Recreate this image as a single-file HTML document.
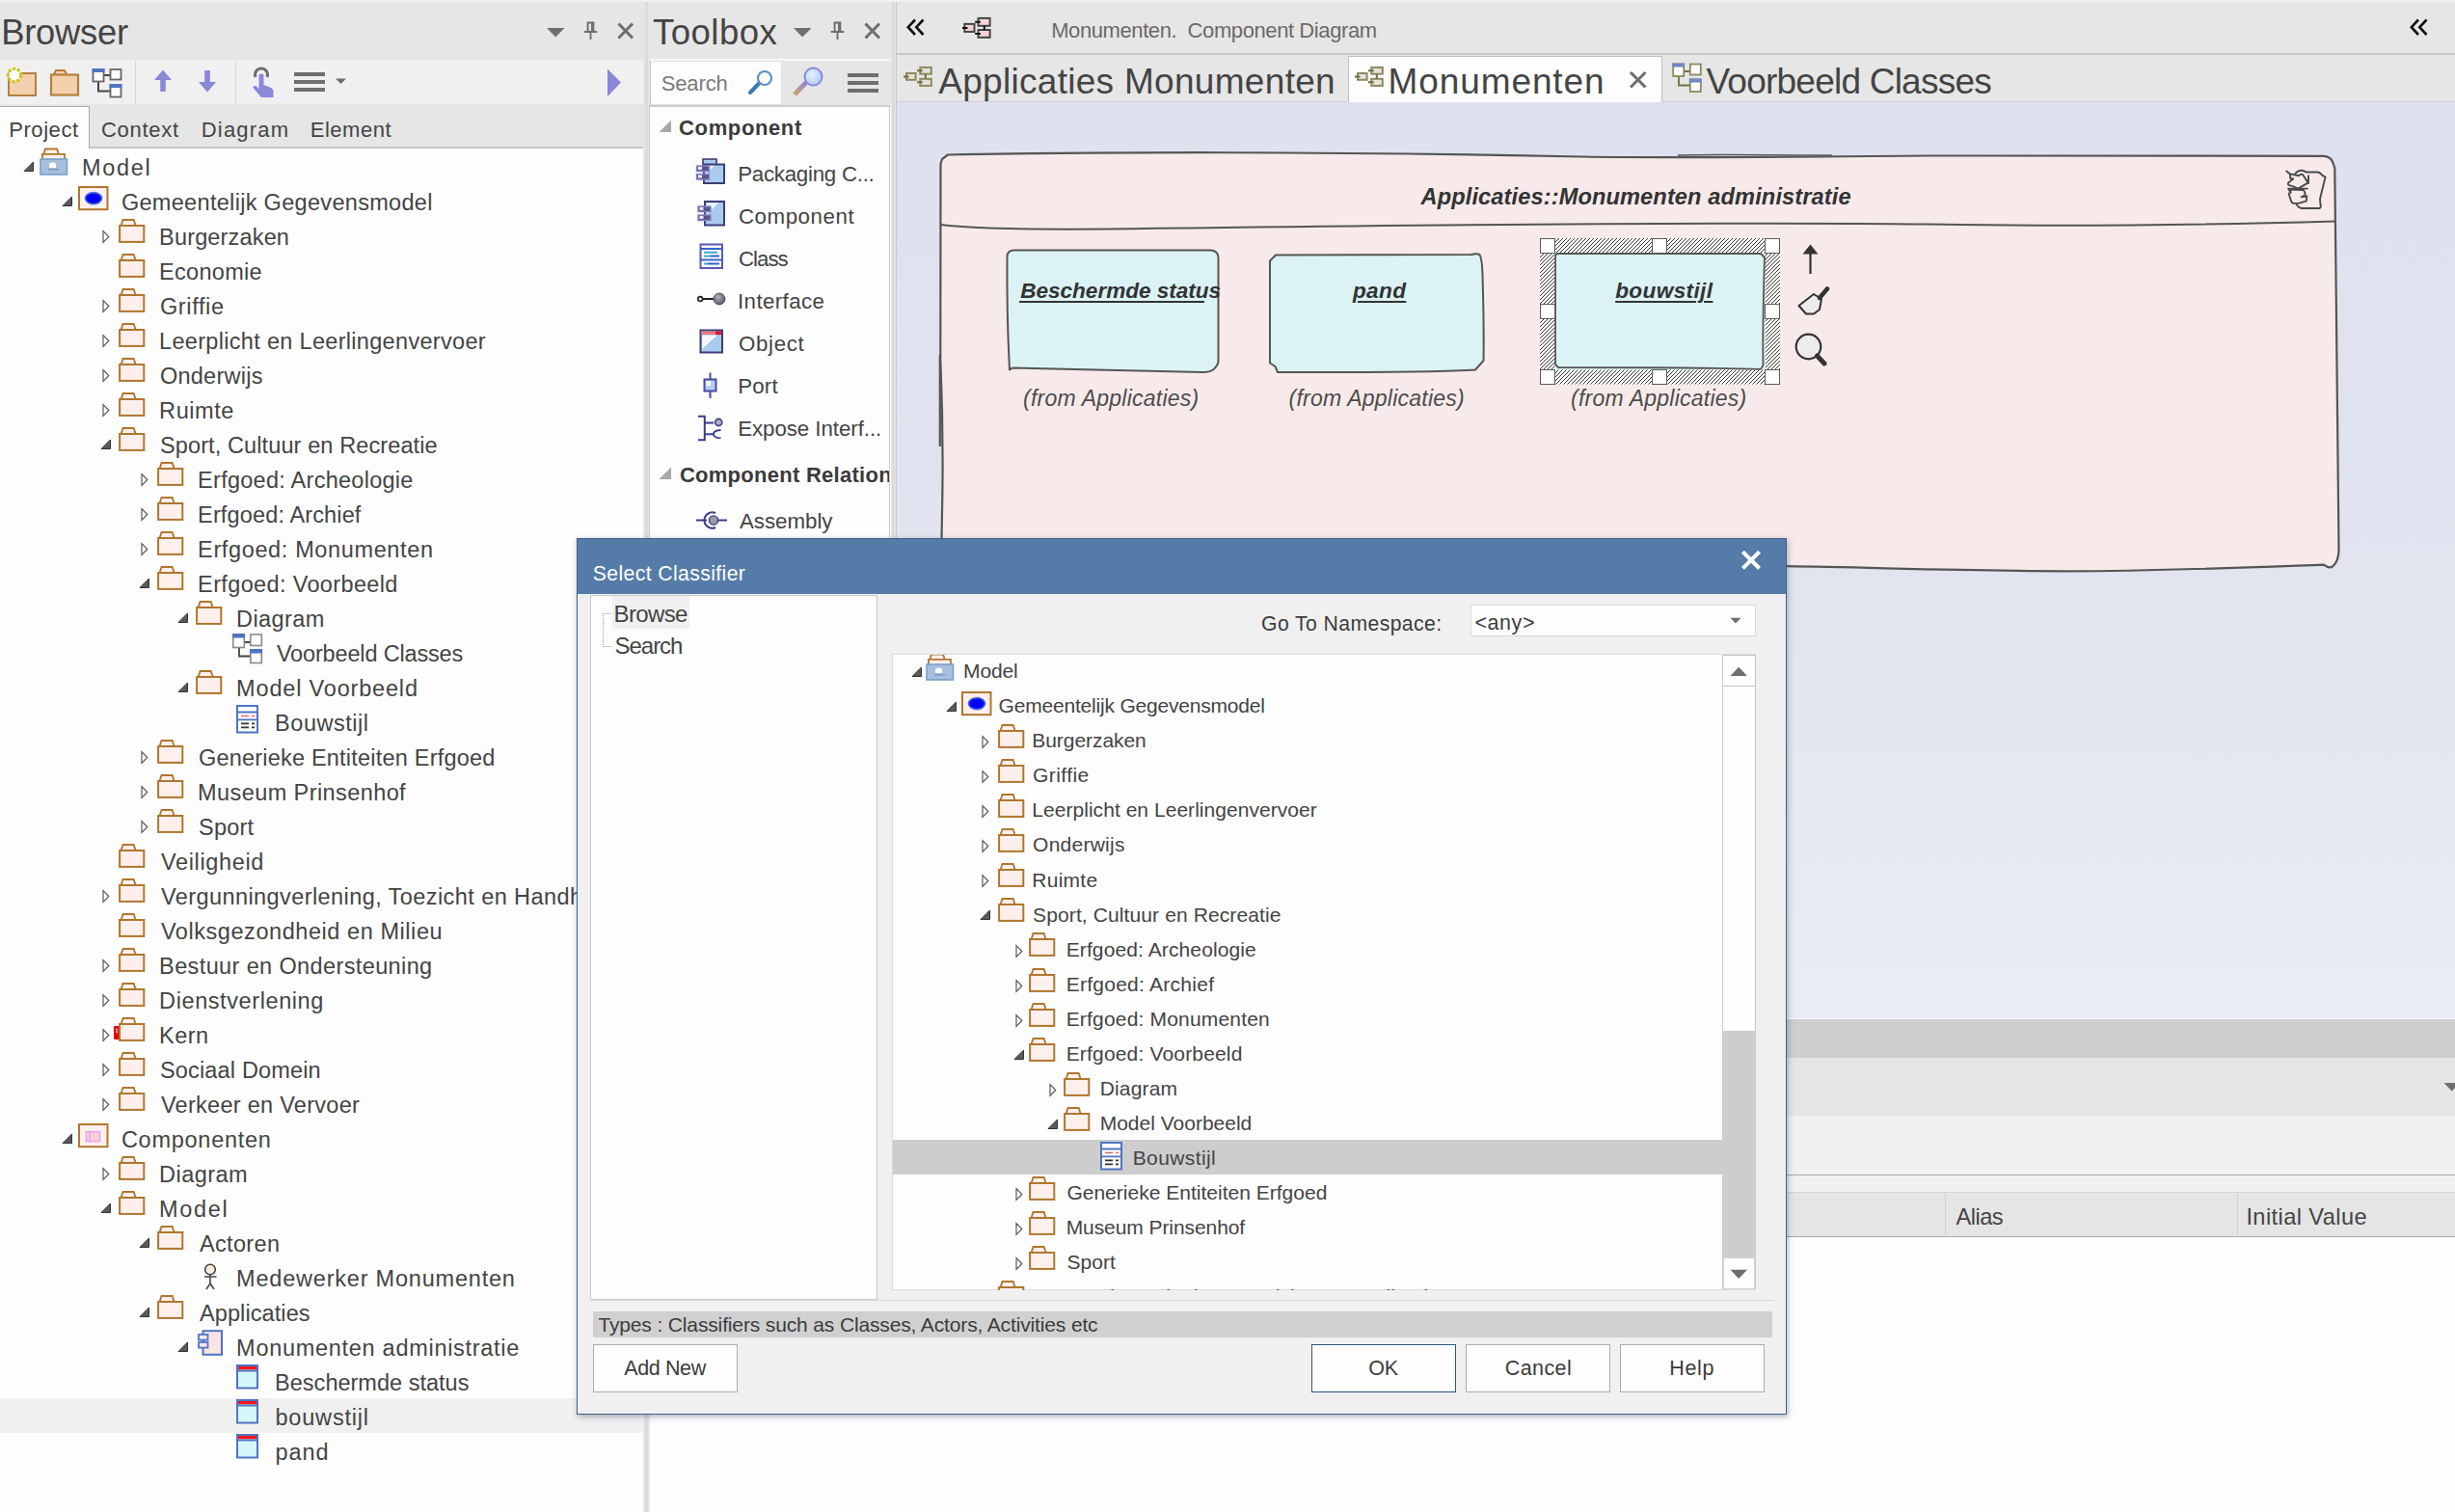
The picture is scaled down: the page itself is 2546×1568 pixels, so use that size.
<!DOCTYPE html>
<html><head><meta charset="utf-8"><title>EA</title>
<style>
html,body{margin:0;padding:0;}
body{width:2546px;height:1568px;position:relative;overflow:hidden;background:#fdfdfd;font-family:"Liberation Sans",sans-serif;}
.b{position:absolute;display:block;box-sizing:border-box;}
.t{position:absolute;white-space:pre;line-height:1;font-family:"Liberation Sans",sans-serif;}
.clip{position:absolute;overflow:hidden;}
</style></head><body>

<div class="b" style="left:0px;top:0px;width:2546px;height:2px;background:#efefef;"></div>
<div class="b" style="left:0px;top:2px;width:667px;height:60px;background:#e6e6e6;"></div>
<div class="b" style="left:0px;top:62px;width:667px;height:46px;background:#f0f0f0;"></div>
<div class="b" style="left:0px;top:108px;width:667px;height:45.4px;background:#e6e6e6;"></div>
<div class="b" style="left:92px;top:152.3px;width:575px;height:1.4px;background:#c4c4c4;"></div>
<div class="b" style="left:0px;top:110px;width:93px;height:43.7px;background:#fdfdfd;border-top:1.5px solid #a8a8a8;border-right:1.5px solid #a8a8a8;"></div>
<span class="t" style="left:1.2px;top:16px;font-size:36.4px;color:#444444;letter-spacing:-0.25px;">Browser</span>
<span class="t" style="left:9.2px;top:124px;font-size:22px;color:#444444;letter-spacing:0.57px;">Project</span>
<span class="t" style="left:104.9px;top:124px;font-size:22px;color:#444444;letter-spacing:0.73px;">Context</span>
<span class="t" style="left:208.8px;top:124px;font-size:22px;color:#444444;letter-spacing:1.18px;">Diagram</span>
<span class="t" style="left:321.7px;top:124px;font-size:22px;color:#444444;letter-spacing:0.53px;">Element</span>
<svg class="b" style="left:567px;top:28px;" width="20" height="12" viewBox="0 0 20 12"><path d="M0 1 L18.5 1 L9.2 10.5 Z" fill="#6e6e6e"/></svg>
<svg class="b" style="left:604.5px;top:22px;" width="16" height="20" viewBox="0 0 16 20"><path d="M3.6 1.5 L11.4 1.5 M4.6 1.5 L4.6 10.5 M10.4 1.5 L10.4 10.5 M9 1.5 L9 10.5 M0.8 11 L14.2 11 M7.5 11 L7.5 19" fill="none" stroke="#6e6e6e" stroke-width="1.9"/></svg>
<svg class="b" style="left:639.5px;top:23px;" width="18" height="18" viewBox="0 0 18 18"><path d="M1.5 1.5 L16 16.5 M16 1.5 L1.5 16.5" fill="none" stroke="#6e6e6e" stroke-width="3"/></svg>
<svg class="b" style="left:5px;top:67px;" width="36" height="34" viewBox="0 0 36 34"><rect x="4" y="9" width="28" height="23" fill="#f3cfae" stroke="#b5813f" stroke-width="2"/><circle cx="10" cy="11" r="6.6" fill="#fdfdfd" stroke="#c8c81e" stroke-width="3.2" stroke-dasharray="3.2 1.6"/><circle cx="10" cy="11" r="4.6" fill="#ffffff"/></svg>
<svg class="b" style="left:50px;top:71px;" width="34" height="30" viewBox="0 0 34 30"><path d="M6 6 L8 2 L17 2 L19 6" fill="#f3cfae" stroke="#b5813f" stroke-width="2"/><rect x="3" y="6.5" width="28" height="21" fill="#f3cfae" stroke="#b5813f" stroke-width="2.2"/></svg>
<svg class="b" style="left:95px;top:70px;" width="33" height="33" viewBox="0 0 33 33"><path d="M13 8 L19 8 M7 15 L7 24.5 L19 24.5" fill="none" stroke="#444" stroke-width="2"/><rect x="1.5" y="2" width="11" height="12.5" fill="#fdfdfd" stroke="#666" stroke-width="1.8"/><rect x="0.6" y="1" width="12.8" height="4" fill="#4f74c4"/><rect x="19.5" y="2" width="11" height="10.5" fill="#fdfdfd" stroke="#666" stroke-width="1.8"/><rect x="19.5" y="18" width="11" height="12.5" fill="#fdfdfd" stroke="#666" stroke-width="1.8"/><rect x="18.6" y="17" width="12.8" height="4" fill="#4f74c4"/></svg>
<div class="b" style="left:140px;top:63px;width:1.2px;height:44px;background:#d2d2d2;"></div>
<svg class="b" style="left:159px;top:72px;" width="20" height="24" viewBox="0 0 20 24"><path d="M10 0.5 L19 11 L12.8 11 L12.8 23 L7.2 23 L7.2 11 L1 11 Z" fill="#8b87d9"/></svg>
<svg class="b" style="left:205px;top:72px;" width="20" height="24" viewBox="0 0 20 24"><path d="M10 23.5 L19 13 L12.8 13 L12.8 1 L7.2 1 L7.2 13 L1 13 Z" fill="#8b87d9"/></svg>
<div class="b" style="left:244px;top:63px;width:1.2px;height:44px;background:#d2d2d2;"></div>
<svg class="b" style="left:260px;top:68px;" width="26" height="34" viewBox="0 0 26 34"><path d="M5 12 A6.5 6.5 0 1 1 17 12" fill="none" stroke="#6e6e6e" stroke-width="3"/><path d="M8.5 9.5 Q11 7.5 13.5 9.5 L13.5 20 L21 23 Q24 24.5 23.5 28 L23.5 33 L11 33 L2 22.5 Q3.5 20 6 21.5 L8.5 24 Z" fill="#8b87d9"/></svg>
<div class="b" style="left:305px;top:75px;width:32px;height:4px;background:#6e6e6e;"></div>
<div class="b" style="left:305px;top:83px;width:32px;height:4px;background:#6e6e6e;"></div>
<div class="b" style="left:305px;top:91px;width:32px;height:4px;background:#6e6e6e;"></div>
<svg class="b" style="left:348px;top:81px;" width="12" height="7" viewBox="0 0 12 7"><path d="M0 0.5 L11 0.5 L5.5 6 Z" fill="#6e6e6e"/></svg>
<svg class="b" style="left:629px;top:71px;" width="16" height="30" viewBox="0 0 16 30"><path d="M1 0.5 L15 14.5 L1 29 Z" fill="#8b87d9"/></svg>
<div class="b" style="left:0px;top:1450px;width:667px;height:36px;background:#f0f0f0;"></div>
<svg class="b" style="left:23.5px;top:167px;" width="12" height="12" viewBox="0 0 12 12"><path d="M10.5 1 L10.5 10.5 L1 10.5 Z" fill="#5a5a5a" stroke="#333" stroke-width="1"/></svg>
<svg class="b" style="left:41px;top:153px;" width="30" height="30" viewBox="0 0 30 30"><path d="M4.5 6 L6 1.5 L18 1.5 L19.5 6" fill="#fdf0ec" stroke="#b0762e" stroke-width="1.8"/><path d="M3 12 L3 6.8 L26 6.8 L26 12" fill="#fdf0ec" stroke="#b0762e" stroke-width="1.8"/><rect x="1" y="12" width="27.5" height="16" fill="#a7bfdc" stroke="#7ba0cc" stroke-width="1.6"/><path d="M10 21 L10 18 Q10 15.5 13.5 15.5 Q17 15.5 17 18 L17 21 Z" fill="#fdfdfd"/><rect x="9" y="22" width="11" height="1.6" fill="#7ba0cc"/></svg>
<span class="t" style="left:85.1px;top:163px;font-size:23.5px;color:#444444;letter-spacing:1.68px;">Model</span>
<svg class="b" style="left:63.5px;top:203px;" width="12" height="12" viewBox="0 0 12 12"><path d="M10.5 1 L10.5 10.5 L1 10.5 Z" fill="#5a5a5a" stroke="#333" stroke-width="1"/></svg>
<svg class="b" style="left:81px;top:192.8px;" width="32" height="27" viewBox="0 0 32 27"><rect x="1" y="1" width="29.5" height="23.2" fill="#fdf0ec" stroke="#b0762e" stroke-width="2"/><ellipse cx="16" cy="12.6" rx="8.6" ry="6" fill="#0000ff" stroke="#4a6fd8" stroke-width="1.6"/></svg>
<span class="t" style="left:125.9px;top:199px;font-size:23.5px;color:#444444;letter-spacing:0.31px;">Gemeentelijk Gegevensmodel</span>
<svg class="b" style="left:105.5px;top:238px;" width="9" height="15" viewBox="0 0 9 15"><path d="M1 1.6 L6.8 7.5 L1 13.4 Z" fill="#fdfdfd" stroke="#555" stroke-width="1.15"/></svg>
<svg class="b" style="left:123px;top:227px;" width="28" height="26" viewBox="0 0 28 26"><path d="M2.7 6.6 L4.5 1 L15.7 1 L17.5 6.6" fill="#fdf0ec" stroke="#b0762e" stroke-width="1.8"/><rect x="1.1" y="7" width="25.2" height="16.9" fill="#fdf0ec" stroke="#b0762e" stroke-width="2"/></svg>
<span class="t" style="left:165.1px;top:235px;font-size:23.5px;color:#444444;letter-spacing:0.16px;">Burgerzaken</span>
<svg class="b" style="left:123px;top:263px;" width="28" height="26" viewBox="0 0 28 26"><path d="M2.7 6.6 L4.5 1 L15.7 1 L17.5 6.6" fill="#fdf0ec" stroke="#b0762e" stroke-width="1.8"/><rect x="1.1" y="7" width="25.2" height="16.9" fill="#fdf0ec" stroke="#b0762e" stroke-width="2"/></svg>
<span class="t" style="left:165.1px;top:271px;font-size:23.5px;color:#444444;letter-spacing:0.28px;">Economie</span>
<svg class="b" style="left:105.5px;top:310px;" width="9" height="15" viewBox="0 0 9 15"><path d="M1 1.6 L6.8 7.5 L1 13.4 Z" fill="#fdfdfd" stroke="#555" stroke-width="1.15"/></svg>
<svg class="b" style="left:123px;top:299px;" width="28" height="26" viewBox="0 0 28 26"><path d="M2.7 6.6 L4.5 1 L15.7 1 L17.5 6.6" fill="#fdf0ec" stroke="#b0762e" stroke-width="1.8"/><rect x="1.1" y="7" width="25.2" height="16.9" fill="#fdf0ec" stroke="#b0762e" stroke-width="2"/></svg>
<span class="t" style="left:165.9px;top:307px;font-size:23.5px;color:#444444;letter-spacing:0.64px;">Griffie</span>
<svg class="b" style="left:105.5px;top:346px;" width="9" height="15" viewBox="0 0 9 15"><path d="M1 1.6 L6.8 7.5 L1 13.4 Z" fill="#fdfdfd" stroke="#555" stroke-width="1.15"/></svg>
<svg class="b" style="left:123px;top:335px;" width="28" height="26" viewBox="0 0 28 26"><path d="M2.7 6.6 L4.5 1 L15.7 1 L17.5 6.6" fill="#fdf0ec" stroke="#b0762e" stroke-width="1.8"/><rect x="1.1" y="7" width="25.2" height="16.9" fill="#fdf0ec" stroke="#b0762e" stroke-width="2"/></svg>
<span class="t" style="left:165.1px;top:343px;font-size:23.5px;color:#444444;letter-spacing:0.31px;">Leerplicht en Leerlingenvervoer</span>
<svg class="b" style="left:105.5px;top:382px;" width="9" height="15" viewBox="0 0 9 15"><path d="M1 1.6 L6.8 7.5 L1 13.4 Z" fill="#fdfdfd" stroke="#555" stroke-width="1.15"/></svg>
<svg class="b" style="left:123px;top:371px;" width="28" height="26" viewBox="0 0 28 26"><path d="M2.7 6.6 L4.5 1 L15.7 1 L17.5 6.6" fill="#fdf0ec" stroke="#b0762e" stroke-width="1.8"/><rect x="1.1" y="7" width="25.2" height="16.9" fill="#fdf0ec" stroke="#b0762e" stroke-width="2"/></svg>
<span class="t" style="left:165.9px;top:379px;font-size:23.5px;color:#444444;letter-spacing:0.27px;">Onderwijs</span>
<svg class="b" style="left:105.5px;top:418px;" width="9" height="15" viewBox="0 0 9 15"><path d="M1 1.6 L6.8 7.5 L1 13.4 Z" fill="#fdfdfd" stroke="#555" stroke-width="1.15"/></svg>
<svg class="b" style="left:123px;top:407px;" width="28" height="26" viewBox="0 0 28 26"><path d="M2.7 6.6 L4.5 1 L15.7 1 L17.5 6.6" fill="#fdf0ec" stroke="#b0762e" stroke-width="1.8"/><rect x="1.1" y="7" width="25.2" height="16.9" fill="#fdf0ec" stroke="#b0762e" stroke-width="2"/></svg>
<span class="t" style="left:165.1px;top:415px;font-size:23.5px;color:#444444;letter-spacing:0.57px;">Ruimte</span>
<svg class="b" style="left:103.5px;top:455px;" width="12" height="12" viewBox="0 0 12 12"><path d="M10.5 1 L10.5 10.5 L1 10.5 Z" fill="#5a5a5a" stroke="#333" stroke-width="1"/></svg>
<svg class="b" style="left:123px;top:443px;" width="28" height="26" viewBox="0 0 28 26"><path d="M2.7 6.6 L4.5 1 L15.7 1 L17.5 6.6" fill="#fdf0ec" stroke="#b0762e" stroke-width="1.8"/><rect x="1.1" y="7" width="25.2" height="16.9" fill="#fdf0ec" stroke="#b0762e" stroke-width="2"/></svg>
<span class="t" style="left:166.0px;top:451px;font-size:23.5px;color:#444444;letter-spacing:0.11px;">Sport, Cultuur en Recreatie</span>
<svg class="b" style="left:145.5px;top:490px;" width="9" height="15" viewBox="0 0 9 15"><path d="M1 1.6 L6.8 7.5 L1 13.4 Z" fill="#fdfdfd" stroke="#555" stroke-width="1.15"/></svg>
<svg class="b" style="left:163px;top:479px;" width="28" height="26" viewBox="0 0 28 26"><path d="M2.7 6.6 L4.5 1 L15.7 1 L17.5 6.6" fill="#fdf0ec" stroke="#b0762e" stroke-width="1.8"/><rect x="1.1" y="7" width="25.2" height="16.9" fill="#fdf0ec" stroke="#b0762e" stroke-width="2"/></svg>
<span class="t" style="left:205.1px;top:487px;font-size:23.5px;color:#444444;letter-spacing:0.27px;">Erfgoed: Archeologie</span>
<svg class="b" style="left:145.5px;top:526px;" width="9" height="15" viewBox="0 0 9 15"><path d="M1 1.6 L6.8 7.5 L1 13.4 Z" fill="#fdfdfd" stroke="#555" stroke-width="1.15"/></svg>
<svg class="b" style="left:163px;top:515px;" width="28" height="26" viewBox="0 0 28 26"><path d="M2.7 6.6 L4.5 1 L15.7 1 L17.5 6.6" fill="#fdf0ec" stroke="#b0762e" stroke-width="1.8"/><rect x="1.1" y="7" width="25.2" height="16.9" fill="#fdf0ec" stroke="#b0762e" stroke-width="2"/></svg>
<span class="t" style="left:205.1px;top:523px;font-size:23.5px;color:#444444;letter-spacing:0.14px;">Erfgoed: Archief</span>
<svg class="b" style="left:145.5px;top:562px;" width="9" height="15" viewBox="0 0 9 15"><path d="M1 1.6 L6.8 7.5 L1 13.4 Z" fill="#fdfdfd" stroke="#555" stroke-width="1.15"/></svg>
<svg class="b" style="left:163px;top:551px;" width="28" height="26" viewBox="0 0 28 26"><path d="M2.7 6.6 L4.5 1 L15.7 1 L17.5 6.6" fill="#fdf0ec" stroke="#b0762e" stroke-width="1.8"/><rect x="1.1" y="7" width="25.2" height="16.9" fill="#fdf0ec" stroke="#b0762e" stroke-width="2"/></svg>
<span class="t" style="left:205.1px;top:559px;font-size:23.5px;color:#444444;letter-spacing:0.63px;">Erfgoed: Monumenten</span>
<svg class="b" style="left:143.5px;top:599px;" width="12" height="12" viewBox="0 0 12 12"><path d="M10.5 1 L10.5 10.5 L1 10.5 Z" fill="#5a5a5a" stroke="#333" stroke-width="1"/></svg>
<svg class="b" style="left:163px;top:587px;" width="28" height="26" viewBox="0 0 28 26"><path d="M2.7 6.6 L4.5 1 L15.7 1 L17.5 6.6" fill="#fdf0ec" stroke="#b0762e" stroke-width="1.8"/><rect x="1.1" y="7" width="25.2" height="16.9" fill="#fdf0ec" stroke="#b0762e" stroke-width="2"/></svg>
<span class="t" style="left:205.1px;top:595px;font-size:23.5px;color:#444444;letter-spacing:0.36px;">Erfgoed: Voorbeeld</span>
<svg class="b" style="left:183.5px;top:635px;" width="12" height="12" viewBox="0 0 12 12"><path d="M10.5 1 L10.5 10.5 L1 10.5 Z" fill="#5a5a5a" stroke="#333" stroke-width="1"/></svg>
<svg class="b" style="left:203px;top:623px;" width="28" height="26" viewBox="0 0 28 26"><path d="M2.7 6.6 L4.5 1 L15.7 1 L17.5 6.6" fill="#fdf0ec" stroke="#b0762e" stroke-width="1.8"/><rect x="1.1" y="7" width="25.2" height="16.9" fill="#fdf0ec" stroke="#b0762e" stroke-width="2"/></svg>
<span class="t" style="left:245.1px;top:631px;font-size:23.5px;color:#444444;letter-spacing:0.40px;">Diagram</span>
<svg class="b" style="left:241px;top:656.7px;" width="32" height="32" viewBox="0 0 32 32"><path d="M13 9 L19 9 M7 15 L7 23.5 L19 23.5" fill="none" stroke="#444" stroke-width="1.8"/><rect x="0.8" y="1" width="11.5" height="13.5" fill="#fdfdfd" stroke="#8a8a8a" stroke-width="1.6"/><rect x="0" y="0" width="13" height="4.5" fill="#4f74c4"/><rect x="18.8" y="1" width="11.5" height="11.5" fill="#fdfdfd" stroke="#8a8a8a" stroke-width="1.6"/><rect x="18.8" y="17" width="11.5" height="13.5" fill="#fdfdfd" stroke="#8a8a8a" stroke-width="1.6"/><rect x="18" y="16" width="13" height="4.5" fill="#4f74c4"/></svg>
<span class="t" style="left:286.9px;top:667px;font-size:23.5px;color:#444444;letter-spacing:-0.16px;">Voorbeeld Classes</span>
<svg class="b" style="left:183.5px;top:707px;" width="12" height="12" viewBox="0 0 12 12"><path d="M10.5 1 L10.5 10.5 L1 10.5 Z" fill="#5a5a5a" stroke="#333" stroke-width="1"/></svg>
<svg class="b" style="left:203px;top:695px;" width="28" height="26" viewBox="0 0 28 26"><path d="M2.7 6.6 L4.5 1 L15.7 1 L17.5 6.6" fill="#fdf0ec" stroke="#b0762e" stroke-width="1.8"/><rect x="1.1" y="7" width="25.2" height="16.9" fill="#fdf0ec" stroke="#b0762e" stroke-width="2"/></svg>
<span class="t" style="left:245.1px;top:703px;font-size:23.5px;color:#444444;letter-spacing:0.82px;">Model Voorbeeld</span>
<svg class="b" style="left:245px;top:730.7px;" width="24" height="30" viewBox="0 0 24 30"><rect x="1" y="1" width="21" height="27.5" fill="#fdfdfd" stroke="#4f74c4" stroke-width="2"/><path d="M1 7.5 L22 7.5 M1 15.3 L22 15.3" stroke="#4f74c4" stroke-width="1.8"/><path d="M5 11.5 L13 11.5 M16 11.5 L19 11.5" stroke="#e8606a" stroke-width="1.6"/><path d="M5 19.3 L13 19.3 M16 19.3 L19 19.3 M5 23.3 L13 23.3 M16 23.3 L19 23.3" stroke="#333" stroke-width="1.8"/></svg>
<span class="t" style="left:285.1px;top:739px;font-size:23.5px;color:#444444;letter-spacing:0.52px;">Bouwstijl</span>
<svg class="b" style="left:145.5px;top:778px;" width="9" height="15" viewBox="0 0 9 15"><path d="M1 1.6 L6.8 7.5 L1 13.4 Z" fill="#fdfdfd" stroke="#555" stroke-width="1.15"/></svg>
<svg class="b" style="left:163px;top:767px;" width="28" height="26" viewBox="0 0 28 26"><path d="M2.7 6.6 L4.5 1 L15.7 1 L17.5 6.6" fill="#fdf0ec" stroke="#b0762e" stroke-width="1.8"/><rect x="1.1" y="7" width="25.2" height="16.9" fill="#fdf0ec" stroke="#b0762e" stroke-width="2"/></svg>
<span class="t" style="left:205.9px;top:775px;font-size:23.5px;color:#444444;letter-spacing:0.21px;">Generieke Entiteiten Erfgoed</span>
<svg class="b" style="left:145.5px;top:814px;" width="9" height="15" viewBox="0 0 9 15"><path d="M1 1.6 L6.8 7.5 L1 13.4 Z" fill="#fdfdfd" stroke="#555" stroke-width="1.15"/></svg>
<svg class="b" style="left:163px;top:803px;" width="28" height="26" viewBox="0 0 28 26"><path d="M2.7 6.6 L4.5 1 L15.7 1 L17.5 6.6" fill="#fdf0ec" stroke="#b0762e" stroke-width="1.8"/><rect x="1.1" y="7" width="25.2" height="16.9" fill="#fdf0ec" stroke="#b0762e" stroke-width="2"/></svg>
<span class="t" style="left:205.1px;top:811px;font-size:23.5px;color:#444444;letter-spacing:0.41px;">Museum Prinsenhof</span>
<svg class="b" style="left:145.5px;top:850px;" width="9" height="15" viewBox="0 0 9 15"><path d="M1 1.6 L6.8 7.5 L1 13.4 Z" fill="#fdfdfd" stroke="#555" stroke-width="1.15"/></svg>
<svg class="b" style="left:163px;top:839px;" width="28" height="26" viewBox="0 0 28 26"><path d="M2.7 6.6 L4.5 1 L15.7 1 L17.5 6.6" fill="#fdf0ec" stroke="#b0762e" stroke-width="1.8"/><rect x="1.1" y="7" width="25.2" height="16.9" fill="#fdf0ec" stroke="#b0762e" stroke-width="2"/></svg>
<span class="t" style="left:206.0px;top:847px;font-size:23.5px;color:#444444;letter-spacing:0.24px;">Sport</span>
<svg class="b" style="left:123px;top:875px;" width="28" height="26" viewBox="0 0 28 26"><path d="M2.7 6.6 L4.5 1 L15.7 1 L17.5 6.6" fill="#fdf0ec" stroke="#b0762e" stroke-width="1.8"/><rect x="1.1" y="7" width="25.2" height="16.9" fill="#fdf0ec" stroke="#b0762e" stroke-width="2"/></svg>
<span class="t" style="left:166.9px;top:883px;font-size:23.5px;color:#444444;letter-spacing:0.66px;">Veiligheid</span>
<svg class="b" style="left:105.5px;top:922px;" width="9" height="15" viewBox="0 0 9 15"><path d="M1 1.6 L6.8 7.5 L1 13.4 Z" fill="#fdfdfd" stroke="#555" stroke-width="1.15"/></svg>
<svg class="b" style="left:123px;top:911px;" width="28" height="26" viewBox="0 0 28 26"><path d="M2.7 6.6 L4.5 1 L15.7 1 L17.5 6.6" fill="#fdf0ec" stroke="#b0762e" stroke-width="1.8"/><rect x="1.1" y="7" width="25.2" height="16.9" fill="#fdf0ec" stroke="#b0762e" stroke-width="2"/></svg>
<span class="t" style="left:166.9px;top:919px;font-size:23.5px;color:#444444;letter-spacing:0.42px;">Vergunningverlening, Toezicht en Handh</span>
<svg class="b" style="left:123px;top:947px;" width="28" height="26" viewBox="0 0 28 26"><path d="M2.7 6.6 L4.5 1 L15.7 1 L17.5 6.6" fill="#fdf0ec" stroke="#b0762e" stroke-width="1.8"/><rect x="1.1" y="7" width="25.2" height="16.9" fill="#fdf0ec" stroke="#b0762e" stroke-width="2"/></svg>
<span class="t" style="left:166.9px;top:955px;font-size:23.5px;color:#444444;letter-spacing:0.56px;">Volksgezondheid en Milieu</span>
<svg class="b" style="left:105.5px;top:994px;" width="9" height="15" viewBox="0 0 9 15"><path d="M1 1.6 L6.8 7.5 L1 13.4 Z" fill="#fdfdfd" stroke="#555" stroke-width="1.15"/></svg>
<svg class="b" style="left:123px;top:983px;" width="28" height="26" viewBox="0 0 28 26"><path d="M2.7 6.6 L4.5 1 L15.7 1 L17.5 6.6" fill="#fdf0ec" stroke="#b0762e" stroke-width="1.8"/><rect x="1.1" y="7" width="25.2" height="16.9" fill="#fdf0ec" stroke="#b0762e" stroke-width="2"/></svg>
<span class="t" style="left:165.1px;top:991px;font-size:23.5px;color:#444444;letter-spacing:0.38px;">Bestuur en Ondersteuning</span>
<svg class="b" style="left:105.5px;top:1030px;" width="9" height="15" viewBox="0 0 9 15"><path d="M1 1.6 L6.8 7.5 L1 13.4 Z" fill="#fdfdfd" stroke="#555" stroke-width="1.15"/></svg>
<svg class="b" style="left:123px;top:1019px;" width="28" height="26" viewBox="0 0 28 26"><path d="M2.7 6.6 L4.5 1 L15.7 1 L17.5 6.6" fill="#fdf0ec" stroke="#b0762e" stroke-width="1.8"/><rect x="1.1" y="7" width="25.2" height="16.9" fill="#fdf0ec" stroke="#b0762e" stroke-width="2"/></svg>
<span class="t" style="left:165.1px;top:1027px;font-size:23.5px;color:#444444;letter-spacing:0.59px;">Dienstverlening</span>
<svg class="b" style="left:105.5px;top:1066px;" width="9" height="15" viewBox="0 0 9 15"><path d="M1 1.6 L6.8 7.5 L1 13.4 Z" fill="#fdfdfd" stroke="#555" stroke-width="1.15"/></svg>
<svg class="b" style="left:118px;top:1064px;" width="8" height="15" viewBox="0 0 8 15"><rect x="0" y="0" width="7" height="14" rx="1" fill="#e60000"/><rect x="2" y="2.5" width="2" height="5" fill="#ff8a8a"/></svg>
<svg class="b" style="left:123px;top:1055px;" width="28" height="26" viewBox="0 0 28 26"><path d="M2.7 6.6 L4.5 1 L15.7 1 L17.5 6.6" fill="#fdf0ec" stroke="#b0762e" stroke-width="1.8"/><rect x="1.1" y="7" width="25.2" height="16.9" fill="#fdf0ec" stroke="#b0762e" stroke-width="2"/></svg>
<span class="t" style="left:165.1px;top:1063px;font-size:23.5px;color:#444444;letter-spacing:0.48px;">Kern</span>
<svg class="b" style="left:105.5px;top:1102px;" width="9" height="15" viewBox="0 0 9 15"><path d="M1 1.6 L6.8 7.5 L1 13.4 Z" fill="#fdfdfd" stroke="#555" stroke-width="1.15"/></svg>
<svg class="b" style="left:123px;top:1091px;" width="28" height="26" viewBox="0 0 28 26"><path d="M2.7 6.6 L4.5 1 L15.7 1 L17.5 6.6" fill="#fdf0ec" stroke="#b0762e" stroke-width="1.8"/><rect x="1.1" y="7" width="25.2" height="16.9" fill="#fdf0ec" stroke="#b0762e" stroke-width="2"/></svg>
<span class="t" style="left:166.0px;top:1099px;font-size:23.5px;color:#444444;letter-spacing:0.16px;">Sociaal Domein</span>
<svg class="b" style="left:105.5px;top:1138px;" width="9" height="15" viewBox="0 0 9 15"><path d="M1 1.6 L6.8 7.5 L1 13.4 Z" fill="#fdfdfd" stroke="#555" stroke-width="1.15"/></svg>
<svg class="b" style="left:123px;top:1127px;" width="28" height="26" viewBox="0 0 28 26"><path d="M2.7 6.6 L4.5 1 L15.7 1 L17.5 6.6" fill="#fdf0ec" stroke="#b0762e" stroke-width="1.8"/><rect x="1.1" y="7" width="25.2" height="16.9" fill="#fdf0ec" stroke="#b0762e" stroke-width="2"/></svg>
<span class="t" style="left:166.9px;top:1135px;font-size:23.5px;color:#444444;letter-spacing:0.28px;">Verkeer en Vervoer</span>
<svg class="b" style="left:63.5px;top:1175px;" width="12" height="12" viewBox="0 0 12 12"><path d="M10.5 1 L10.5 10.5 L1 10.5 Z" fill="#5a5a5a" stroke="#333" stroke-width="1"/></svg>
<svg class="b" style="left:81px;top:1164.8px;" width="32" height="27" viewBox="0 0 32 27"><rect x="1" y="1" width="29.5" height="23.2" fill="#fdf0ec" stroke="#b0762e" stroke-width="2"/><rect x="8.5" y="8.6" width="14" height="10" fill="#f5d5d5" stroke="#f0a0f0" stroke-width="1.6"/><path d="M12 8.6 L12 18.6" stroke="#f0a0f0" stroke-width="1.6"/></svg>
<span class="t" style="left:125.9px;top:1171px;font-size:23.5px;color:#444444;letter-spacing:0.74px;">Componenten</span>
<svg class="b" style="left:105.5px;top:1210px;" width="9" height="15" viewBox="0 0 9 15"><path d="M1 1.6 L6.8 7.5 L1 13.4 Z" fill="#fdfdfd" stroke="#555" stroke-width="1.15"/></svg>
<svg class="b" style="left:123px;top:1199px;" width="28" height="26" viewBox="0 0 28 26"><path d="M2.7 6.6 L4.5 1 L15.7 1 L17.5 6.6" fill="#fdf0ec" stroke="#b0762e" stroke-width="1.8"/><rect x="1.1" y="7" width="25.2" height="16.9" fill="#fdf0ec" stroke="#b0762e" stroke-width="2"/></svg>
<span class="t" style="left:165.1px;top:1207px;font-size:23.5px;color:#444444;letter-spacing:0.43px;">Diagram</span>
<svg class="b" style="left:103.5px;top:1247px;" width="12" height="12" viewBox="0 0 12 12"><path d="M10.5 1 L10.5 10.5 L1 10.5 Z" fill="#5a5a5a" stroke="#333" stroke-width="1"/></svg>
<svg class="b" style="left:123px;top:1235px;" width="28" height="26" viewBox="0 0 28 26"><path d="M2.7 6.6 L4.5 1 L15.7 1 L17.5 6.6" fill="#fdf0ec" stroke="#b0762e" stroke-width="1.8"/><rect x="1.1" y="7" width="25.2" height="16.9" fill="#fdf0ec" stroke="#b0762e" stroke-width="2"/></svg>
<span class="t" style="left:165.1px;top:1243px;font-size:23.5px;color:#444444;letter-spacing:1.68px;">Model</span>
<svg class="b" style="left:143.5px;top:1283px;" width="12" height="12" viewBox="0 0 12 12"><path d="M10.5 1 L10.5 10.5 L1 10.5 Z" fill="#5a5a5a" stroke="#333" stroke-width="1"/></svg>
<svg class="b" style="left:163px;top:1271px;" width="28" height="26" viewBox="0 0 28 26"><path d="M2.7 6.6 L4.5 1 L15.7 1 L17.5 6.6" fill="#fdf0ec" stroke="#b0762e" stroke-width="1.8"/><rect x="1.1" y="7" width="25.2" height="16.9" fill="#fdf0ec" stroke="#b0762e" stroke-width="2"/></svg>
<span class="t" style="left:207.0px;top:1279px;font-size:23.5px;color:#444444;letter-spacing:0.33px;">Actoren</span>
<svg class="b" style="left:210px;top:1309px;" width="20" height="30" viewBox="0 0 20 30"><circle cx="8" cy="7.5" r="5.3" fill="#fdebd8" stroke="#444" stroke-width="1.6"/><path d="M8 13 L8 22 M2 15 L14.5 15 M8 22 L4 28 M8 22 L12 28" fill="none" stroke="#444" stroke-width="1.6"/></svg>
<span class="t" style="left:245.1px;top:1315px;font-size:23.5px;color:#444444;letter-spacing:0.79px;">Medewerker Monumenten</span>
<svg class="b" style="left:143.5px;top:1355px;" width="12" height="12" viewBox="0 0 12 12"><path d="M10.5 1 L10.5 10.5 L1 10.5 Z" fill="#5a5a5a" stroke="#333" stroke-width="1"/></svg>
<svg class="b" style="left:163px;top:1343px;" width="28" height="26" viewBox="0 0 28 26"><path d="M2.7 6.6 L4.5 1 L15.7 1 L17.5 6.6" fill="#fdf0ec" stroke="#b0762e" stroke-width="1.8"/><rect x="1.1" y="7" width="25.2" height="16.9" fill="#fdf0ec" stroke="#b0762e" stroke-width="2"/></svg>
<span class="t" style="left:207.0px;top:1351px;font-size:23.5px;color:#444444;letter-spacing:0.09px;">Applicaties</span>
<svg class="b" style="left:183.5px;top:1391px;" width="12" height="12" viewBox="0 0 12 12"><path d="M10.5 1 L10.5 10.5 L1 10.5 Z" fill="#5a5a5a" stroke="#333" stroke-width="1"/></svg>
<svg class="b" style="left:205px;top:1379px;" width="28" height="28" viewBox="0 0 28 28"><rect x="5.5" y="1.2" width="19.5" height="24.6" fill="#fde4e4" stroke="#4f74c4" stroke-width="2"/><rect x="1" y="5" width="9.5" height="5.6" fill="#fde4e4" stroke="#4f74c4" stroke-width="1.8"/><rect x="1" y="13" width="9.5" height="5.6" fill="#fde4e4" stroke="#4f74c4" stroke-width="1.8"/></svg>
<span class="t" style="left:245.1px;top:1387px;font-size:23.5px;color:#444444;letter-spacing:0.71px;">Monumenten administratie</span>
<svg class="b" style="left:245px;top:1414.7px;" width="24" height="27" viewBox="0 0 24 27"><rect x="1" y="1" width="21" height="23.5" fill="#d5f7f7" stroke="#4f74c4" stroke-width="2"/><rect x="2" y="2" width="19" height="3.4" fill="#f0141e"/><path d="M1 6.6 L22 6.6" stroke="#4f74c4" stroke-width="1.8"/></svg>
<span class="t" style="left:285.1px;top:1423px;font-size:23.5px;color:#444444;letter-spacing:0.01px;">Beschermde status</span>
<svg class="b" style="left:245px;top:1450.7px;" width="24" height="27" viewBox="0 0 24 27"><rect x="1" y="1" width="21" height="23.5" fill="#d5f7f7" stroke="#4f74c4" stroke-width="2"/><rect x="2" y="2" width="19" height="3.4" fill="#f0141e"/><path d="M1 6.6 L22 6.6" stroke="#4f74c4" stroke-width="1.8"/></svg>
<span class="t" style="left:285.5px;top:1459px;font-size:23.5px;color:#444444;letter-spacing:0.80px;">bouwstijl</span>
<svg class="b" style="left:245px;top:1486.7px;" width="24" height="27" viewBox="0 0 24 27"><rect x="1" y="1" width="21" height="23.5" fill="#d5f7f7" stroke="#4f74c4" stroke-width="2"/><rect x="2" y="2" width="19" height="3.4" fill="#f0141e"/><path d="M1 6.6 L22 6.6" stroke="#4f74c4" stroke-width="1.8"/></svg>
<span class="t" style="left:285.5px;top:1495px;font-size:23.5px;color:#444444;letter-spacing:0.96px;">pand</span>
<div class="b" style="left:667px;top:2px;width:7px;height:1566px;background:#e6e6e6;"></div>
<div class="b" style="left:669px;top:2px;width:3px;height:1566px;background:#dcdcdc;"></div>
<div class="b" style="left:674px;top:2px;width:250px;height:60px;background:#e6e6e6;"></div>
<div class="b" style="left:674px;top:62px;width:250px;height:48px;background:#e6e6e6;"></div>
<div class="b" style="left:674px;top:61px;width:249px;height:1.5px;background:#f6f6f6;"></div>
<span class="t" style="left:676.9px;top:16px;font-size:36.6px;color:#444444;letter-spacing:0.49px;">Toolbox</span>
<svg class="b" style="left:823px;top:28px;" width="20" height="12" viewBox="0 0 20 12"><path d="M0 1 L18.5 1 L9.2 10.5 Z" fill="#6e6e6e"/></svg>
<svg class="b" style="left:860.5px;top:22px;" width="16" height="20" viewBox="0 0 16 20"><path d="M3.6 1.5 L11.4 1.5 M4.6 1.5 L4.6 10.5 M10.4 1.5 L10.4 10.5 M9 1.5 L9 10.5 M0.8 11 L14.2 11 M7.5 11 L7.5 19" fill="none" stroke="#6e6e6e" stroke-width="1.9"/></svg>
<svg class="b" style="left:895.5px;top:23px;" width="18" height="18" viewBox="0 0 18 18"><path d="M1.5 1.5 L16 16.5 M16 1.5 L1.5 16.5" fill="none" stroke="#6e6e6e" stroke-width="3"/></svg>
<div class="b" style="left:673.5px;top:63px;width:137px;height:46px;background:#fdfdfd;border:1px solid #e0e0e0;border-left:1.2px solid #c6c6c6;"></div>
<span class="t" style="left:685.7px;top:76px;font-size:22px;color:#7a7a7a;letter-spacing:-0.13px;">Search</span>
<svg class="b" style="left:775px;top:72px;" width="28" height="27" viewBox="0 0 28 27"><path d="M3 24 L13 13.5" stroke="#3b78b0" stroke-width="4" stroke-linecap="round"/><circle cx="18" cy="9" r="7" fill="#fdfdfd" stroke="#5b93c8" stroke-width="2.2"/></svg>
<svg class="b" style="left:821px;top:69px;" width="34" height="32" viewBox="0 0 34 32"><defs><linearGradient id="mg" x1="0" y1="1" x2="1" y2="0"><stop offset="0" stop-color="#c9a56a"/><stop offset="1" stop-color="#8b87d9"/></linearGradient><radialGradient id="gl" cx="0.4" cy="0.4" r="0.7"><stop offset="0" stop-color="#e8f2ff"/><stop offset="1" stop-color="#a9c8f0"/></radialGradient></defs><path d="M3 29 L15 16.5" stroke="url(#mg)" stroke-width="5" stroke-linecap="butt"/><circle cx="22.5" cy="10.5" r="9" fill="url(#gl)" stroke="#8b87d9" stroke-width="2"/></svg>
<div class="b" style="left:879px;top:76px;width:32px;height:4px;background:#6e6e6e;"></div>
<div class="b" style="left:879px;top:84px;width:32px;height:4px;background:#6e6e6e;"></div>
<div class="b" style="left:879px;top:92px;width:32px;height:4px;background:#6e6e6e;"></div>
<div class="b" style="left:673px;top:109px;width:250px;height:948px;background:#fdfdfd;border-left:1.2px solid #c6c6c6;border-right:1.3px solid #c8c8c8;border-top:2px solid #cccccc;"></div>
<svg class="b" style="left:683px;top:124px;" width="14" height="14" viewBox="0 0 14 14"><path d="M13 0.5 L13 13 L0.5 13 Z" fill="#a8a8a8"/></svg>
<span class="t" style="left:704.1px;top:122px;font-size:22px;color:#3a3a3a;font-weight:700;letter-spacing:0.62px;">Component</span>
<svg class="b" style="left:683px;top:484px;" width="14" height="14" viewBox="0 0 14 14"><path d="M13 0.5 L13 13 L0.5 13 Z" fill="#a8a8a8"/></svg>
<div class="clip" style="left:700px;top:472px;width:222px;height:40px;">
<span class="t" style="left:4.9px;top:10px;font-size:22px;color:#3a3a3a;font-weight:700;letter-spacing:0.27px;">Component Relation</span>
</div>
<svg class="b" style="left:721px;top:163px;" width="32" height="29" viewBox="0 0 32 29"><rect x="8" y="2" width="14" height="6" fill="#a9cbee" stroke="#3c3c78" stroke-width="1.6"/><rect x="9" y="7.5" width="21" height="19.5" fill="#a9cbee" stroke="#3c3c78" stroke-width="2"/><path d="M10.5 18 L20 9 L10.5 9 Z" fill="#eef5fd"/><rect x="1.5" y="9" width="13" height="5.6" fill="#55558c" stroke="#8a86c8" stroke-width="1.4"/><rect x="1.5" y="17.5" width="13" height="5.6" fill="#55558c" stroke="#8a86c8" stroke-width="1.4"/><rect x="3" y="10" width="4" height="3" fill="#e8eefc"/><rect x="3" y="18.5" width="4" height="3" fill="#e8eefc"/></svg>
<span class="t" style="left:765.2px;top:170px;font-size:22.3px;color:#444444;letter-spacing:-0.26px;">Packaging C...</span>
<svg class="b" style="left:721px;top:207px;" width="32" height="29" viewBox="0 0 32 29"><rect x="10" y="2" width="20" height="24.5" fill="#a9cbee" stroke="#3c3c78" stroke-width="2"/><path d="M11.5 16 L24 3.5 L11.5 3.5 Z" fill="#eef5fd"/><rect x="3" y="7" width="13" height="5.6" fill="#55558c" stroke="#8a86c8" stroke-width="1.4"/><rect x="3" y="16" width="13" height="5.6" fill="#55558c" stroke="#8a86c8" stroke-width="1.4"/><rect x="4.5" y="8" width="4" height="3" fill="#e8eefc"/><rect x="4.5" y="17" width="4" height="3" fill="#e8eefc"/></svg>
<span class="t" style="left:765.9px;top:214px;font-size:22.3px;color:#444444;letter-spacing:0.56px;">Component</span>
<svg class="b" style="left:725px;top:252px;" width="26" height="28" viewBox="0 0 26 28"><rect x="1.5" y="1.5" width="22.5" height="24.5" fill="#fdfdfd" stroke="#5a5ab4" stroke-width="2"/><path d="M2 6 L24 6 M2 17.5 L24 17.5" stroke="#3c64c8" stroke-width="2.2"/><path d="M5 9.8 L19 9.8 M5 21.5 L9 21.5" stroke="#38b0c4" stroke-width="2"/><path d="M5 13.6 L12 13.6" stroke="#38b0c4" stroke-width="2"/><path d="M12 13.6 L21 13.6 M9 21.5 L21 21.5" stroke="#2a62d0" stroke-width="2"/></svg>
<span class="t" style="left:765.9px;top:258px;font-size:22.3px;color:#444444;letter-spacing:-0.98px;">Class</span>
<svg class="b" style="left:722px;top:303px;" width="32" height="16" viewBox="0 0 32 16"><path d="M6 7 L20 7" stroke="#222" stroke-width="2"/><circle cx="4.2" cy="7" r="2.4" fill="#fdfdfd" stroke="#222" stroke-width="1.6"/><defs><radialGradient id="ig" cx="0.4" cy="0.35" r="0.7"><stop offset="0" stop-color="#b4b4c0"/><stop offset="1" stop-color="#55555f"/></radialGradient></defs><circle cx="24" cy="7" r="5.9" fill="url(#ig)" stroke="#4a4a55" stroke-width="1"/></svg>
<span class="t" style="left:765.0px;top:302px;font-size:22.3px;color:#444444;letter-spacing:0.39px;">Interface</span>
<svg class="b" style="left:725px;top:341px;" width="26" height="27" viewBox="0 0 26 27"><rect x="1.5" y="1.5" width="22.5" height="23" fill="#a9cbee" stroke="#3c3c78" stroke-width="2"/><path d="M3 21 L19 6.5 L3 6.5 Z" fill="#f4f8fe"/><rect x="2.5" y="2.5" width="20.5" height="3.6" fill="#e87882"/><rect x="17" y="2.5" width="6" height="3.6" fill="#d81830"/></svg>
<span class="t" style="left:766.0px;top:346px;font-size:22.3px;color:#444444;letter-spacing:0.65px;">Object</span>
<svg class="b" style="left:727px;top:386px;" width="20" height="28" viewBox="0 0 20 28"><path d="M9.5 0.5 L9.5 27" stroke="#4a4aa0" stroke-width="2"/><rect x="3.5" y="7.5" width="12" height="12" fill="#b4d0f0" stroke="#4a4aa0" stroke-width="2"/><rect x="5" y="9" width="5" height="5" fill="#eef5fd"/></svg>
<span class="t" style="left:765.2px;top:390px;font-size:22.3px;color:#444444;letter-spacing:0.17px;">Port</span>
<svg class="b" style="left:722px;top:430px;" width="30" height="28" viewBox="0 0 30 28"><path d="M2 1.7 L8.8 1.7 L8.8 26.3 L2 26.3 M8.8 8.4 L18 8.4 M8.8 20.2 L18 20.2" fill="none" stroke="#3c3c8c" stroke-width="2"/><path d="M25.5 16 Q18 16.4 18 20.2 Q18 24 25.5 24.4" fill="none" stroke="#3c3c8c" stroke-width="1.8"/><circle cx="23.2" cy="8" r="3.6" fill="#b0b0b8" stroke="#3c3c8c" stroke-width="1.6"/></svg>
<span class="t" style="left:765.2px;top:434px;font-size:22.3px;color:#444444;letter-spacing:-0.06px;">Expose Interf...</span>
<svg class="b" style="left:721px;top:530px;" width="34" height="20" viewBox="0 0 34 20"><path d="M1 9.5 L12 9.5 M24 9.5 L33 9.5" stroke="#3c3c8c" stroke-width="2"/><path d="M21 2 A8.2 8.2 0 1 0 21 17" fill="none" stroke="#3c3c8c" stroke-width="2"/><circle cx="19" cy="9.5" r="4.6" fill="#9a9aa4" stroke="#3c3c8c" stroke-width="1.4"/></svg>
<span class="t" style="left:767.0px;top:530px;font-size:22.3px;color:#444444;letter-spacing:-0.02px;">Assembly</span>
<div class="b" style="left:924px;top:2px;width:6px;height:1055px;background:#e6e6e6;"></div>
<div class="b" style="left:925.3px;top:2px;width:2.7px;height:1055px;background:#dcdcdc;"></div>
<div class="b" style="left:930px;top:2px;width:1616px;height:54px;background:#e6e6e6;"></div>
<div class="b" style="left:929px;top:2px;width:1.2px;height:1055px;background:#c8c8c8;"></div>
<div class="b" style="left:930px;top:55px;width:1616px;height:1.5px;background:#c8c8c8;"></div>
<div class="b" style="left:930px;top:56.5px;width:1616px;height:49px;background:#e6e6e6;"></div>
<div class="b" style="left:930px;top:105px;width:1616px;height:1.2px;background:#d0d0d0;"></div>
<svg class="b" style="left:939.5px;top:18.5px;" width="20" height="20" viewBox="0 0 20 20"><path d="M9 1.5 L1.8 9.2 L9 17 M17.5 1.5 L10.3 9.2 L17.5 17" fill="none" stroke="#111" stroke-width="2.6"/></svg>
<svg class="b" style="left:2498.5px;top:18.5px;" width="20" height="20" viewBox="0 0 20 20"><path d="M9 1.5 L1.8 9.2 L9 17 M17.5 1.5 L10.3 9.2 L17.5 17" fill="none" stroke="#111" stroke-width="2.6"/></svg>
<svg class="b" style="left:998px;top:16.9px;" width="32" height="24" viewBox="0 0 32 24"><rect x="2.3" y="7.9" width="10.2" height="8.0" fill="#fad4d4" stroke="#444" stroke-width="2"/><rect x="16.5" y="1.9" width="12.1" height="7.9" fill="#fad4d4" stroke="#444" stroke-width="2"/><rect x="16.5" y="14.0" width="12.1" height="7.8" fill="#fad4d4" stroke="#444" stroke-width="2"/><path d="M0 11.9 L5.5 11.9 M13.2 5.85 L18.9 5.85 M13.2 17.9 L18.9 17.9 M22.8 9.8 L22.8 14.0" stroke="#111" stroke-width="2"/></svg>
<span class="t" style="left:1090.2px;top:21px;font-size:22px;color:#6a6a6a;letter-spacing:-0.41px;">Monumenten.  Component Diagram</span>
<svg class="b" style="left:937px;top:67.9px;" width="32" height="24" viewBox="0 0 32 24"><rect x="3.0" y="8.0" width="9.6" height="6.8" fill="#e8e0dc" stroke="#8a8a5e" stroke-width="2"/><rect x="17.3" y="1.9" width="11.5" height="6.8" fill="#e8e0dc" stroke="#8a8a5e" stroke-width="2"/><rect x="17.3" y="13.8" width="11.5" height="7.1" fill="#e8e0dc" stroke="#8a8a5e" stroke-width="2"/><path d="M0 11.4 L5.5 11.4 M14.0 5.3 L19.7 5.3 M14.0 17.35 L19.7 17.35 M22.8 8.7 L22.8 13.8" stroke="#6e6e46" stroke-width="2"/></svg>
<span class="t" style="left:973.2px;top:66px;font-size:37px;color:#444444;letter-spacing:0.30px;">Applicaties Monumenten</span>
<div class="b" style="left:1397.5px;top:57.5px;width:326px;height:48.7px;background:#fdfdfd;border:1px solid #c0c0c0;border-bottom:none;"></div>
<svg class="b" style="left:1405px;top:67.9px;" width="32" height="24" viewBox="0 0 32 24"><rect x="3.0" y="8.0" width="9.6" height="6.8" fill="#e8e0dc" stroke="#8a8a5e" stroke-width="2"/><rect x="17.3" y="1.9" width="11.5" height="6.8" fill="#e8e0dc" stroke="#8a8a5e" stroke-width="2"/><rect x="17.3" y="13.8" width="11.5" height="7.1" fill="#e8e0dc" stroke="#8a8a5e" stroke-width="2"/><path d="M0 11.4 L5.5 11.4 M14.0 5.3 L19.7 5.3 M14.0 17.35 L19.7 17.35 M22.8 8.7 L22.8 13.8" stroke="#6e6e46" stroke-width="2"/></svg>
<span class="t" style="left:1439.6px;top:66px;font-size:37px;color:#444444;letter-spacing:0.89px;">Monumenten</span>
<svg class="b" style="left:1689px;top:73px;" width="20" height="20" viewBox="0 0 20 20"><path d="M2 2 L17.5 17.5 M17.5 2 L2 17.5" fill="none" stroke="#6e6e6e" stroke-width="3"/></svg>
<svg class="b" style="left:1734px;top:65px;" width="32" height="32" viewBox="0 0 32 32"><path d="M12 9 L19 9 M7 14 L7 23.5 L19 23.5" fill="none" stroke="#6e6e46" stroke-width="1.8"/><rect x="1.2" y="1.5" width="11" height="12.5" fill="#fdfdfd" stroke="#8a8a5e" stroke-width="1.8"/><rect x="0.3" y="0.5" width="12.8" height="4" fill="#6f88c0"/><rect x="18.8" y="1.5" width="11" height="11" fill="#fdfdfd" stroke="#8a8a5e" stroke-width="1.8"/><rect x="18.8" y="17.5" width="11" height="12.5" fill="#fdfdfd" stroke="#8a8a5e" stroke-width="1.8"/><rect x="17.9" y="16.5" width="12.8" height="4" fill="#6f88c0"/></svg>
<span class="t" style="left:1769.5px;top:66px;font-size:37px;color:#444444;letter-spacing:-0.77px;">Voorbeeld Classes</span>
<div class="b" style="left:930px;top:106.2px;width:1616px;height:950.3px;background:linear-gradient(180deg,#dee1ee 0%,#e0e3ef 40%,#e9ecf5 100%);"></div>
<svg class="b" style="left:930px;top:106px" width="1616" height="951" viewBox="930 106 1616 951">
<path d="M975.5 170 L977 165 L983 160.5 C1200 156.5,1420 158,1640 162.5 C1760 164.5,1900 162,2000 161.5 L2410 161.8 Q2418 162 2420.4 171.6 L2421.3 174 C2422.5 300,2424.5 450,2425.5 570 Q2425.5 582 2419 587.5 Q2415 589.8 2410 585.7 C2330 588.5,2230 592.5,2140 592.3 C2040 592,1940 588.5,1853 587.2 L976.3 586 C976.2 560,977.6 520,977.6 480 C977.6 440,976.5 400,975.3 372 L975.5 170 Z" fill="#f8eaea" stroke="#555555" stroke-width="2.2" stroke-linejoin="round"/>
<path d="M974.8 368 L974.8 463" fill="none" stroke="#555555" stroke-width="2.2"/>
<path d="M1740 161 C1800 159.5,1850 161.2,1900 161" fill="none" stroke="#555555" stroke-width="1.6"/>
<path d="M975.5 233 C1020 238.5,1100 238.5,1200 236.8 C1500 233,1800 230,2000 232.5 C2150 235.5,2300 233,2422 229.5" fill="none" stroke="#555555" stroke-width="2"/>
<!-- element boxes -->
<path d="M1044.5 266 Q1044.5 259.5 1052 259.5 L1255 259.5 Q1263.5 259.5 1263.5 268 L1263.5 374 Q1263.5 379 1258 383.5 Q1254 386.5 1248 386 C1200 384.5,1100 383,1050 381.5 L1047 383.5 C1046.5 370,1044 340,1044.5 266 Z" fill="#dbf3f5" stroke="#555555" stroke-width="2" stroke-linejoin="round"/>
<path d="M1317 270.5 L1323 264.5 L1526 264 Q1531 262.5 1534.5 264 Q1537 268 1537.5 285 C1538.5 320,1539 350,1538.5 374 L1530 383.5 C1480 386.5,1400 386,1325 386 L1322.5 380 L1317 376.5 Z" fill="#dbf3f5" stroke="#555555" stroke-width="2" stroke-linejoin="round"/>
</svg>
<span class="t" style="left:1473.5px;top:193px;font-size:23.6px;color:#333;font-weight:700;font-style:italic;letter-spacing:0.12px;">Applicaties::Monumenten administratie</span>
<div class="clip" style="left:1050px;top:285px;width:216px;height:40px;">
<span class="t" style="left:8.2px;top:6px;font-size:22.6px;color:#333;font-weight:700;font-style:italic;letter-spacing:-0.03px;">Beschermde status</span>
</div>
<div class="b" style="left:1057px;top:312px;width:192px;height:2px;background:#333;"></div>
<span class="t" style="left:1402.9px;top:291px;font-size:22.6px;color:#333;font-weight:700;font-style:italic;letter-spacing:0.37px;text-decoration:underline;text-decoration-thickness:1.8px;text-underline-offset:3px;">pand</span>
<span class="t" style="left:1061.0px;top:402px;font-size:23px;color:#4c4c4c;font-style:italic;letter-spacing:0.24px;">(from Applicaties)</span>
<span class="t" style="left:1336.6px;top:402px;font-size:23px;color:#4c4c4c;font-style:italic;letter-spacing:0.24px;">(from Applicaties)</span>
<span class="t" style="left:1629.0px;top:402px;font-size:23px;color:#4c4c4c;font-style:italic;letter-spacing:0.24px;">(from Applicaties)</span>
<svg class="b" style="left:1596px;top:246px" width="252" height="154" viewBox="1596 246 252 154">
<defs><pattern id="hatch" width="4" height="4" patternUnits="userSpaceOnUse"><rect width="4" height="4" fill="#ffffff"/><path d="M-1 1 L1 -1 M0 4 L4 0 M3 5 L5 3" stroke="#141414" stroke-width="0.85"/></pattern></defs>
<path d="M1597 247 L1846 247 L1846 398.5 L1597 398.5 Z M1612.5 262.5 L1612.5 383 L1830.5 383 L1830.5 262.5 Z" fill="url(#hatch)" fill-rule="evenodd"/>
<rect x="1612.5" y="262.5" width="218" height="121" fill="#dbf3f5"/><path d="M1613 266 Q1613 263 1616 263 L1826 263 L1830 267 C1829 300,1828 350,1828.5 379 L1826 382.8 C1780 381.5,1700 381,1616 381 L1613 378 Z" fill="#dbf3f5" stroke="#555" stroke-width="1.8" stroke-linejoin="round"/>
<g fill="#ffffff" stroke="#5a5a5a" stroke-width="1">
<rect x="1597.5" y="247.5" width="15" height="15"/><rect x="1713.5" y="247.5" width="15" height="15"/><rect x="1830.5" y="247.5" width="15" height="15"/>
<rect x="1597.5" y="315.5" width="15" height="15"/><rect x="1830.5" y="315.5" width="15" height="15"/>
<rect x="1597.5" y="383.5" width="15" height="15"/><rect x="1713.5" y="383.5" width="15" height="15"/><rect x="1830.5" y="383.5" width="15" height="15"/>
</g></svg>
<span class="t" style="left:1675.2px;top:291px;font-size:22.6px;color:#333;font-weight:700;font-style:italic;letter-spacing:0.37px;text-decoration:underline;text-decoration-thickness:1.8px;text-underline-offset:3px;">bouwstijl</span>
<svg class="b" style="left:1864px;top:252px;" width="28" height="36" viewBox="0 0 28 36"><path d="M13.5 8 L13.5 32" stroke="#333" stroke-width="2.2"/><path d="M13.5 1.5 L21.5 11.5 L5.5 11.5 Z" fill="#333"/></svg>
<svg class="b" style="left:1862px;top:296px;" width="36" height="34" viewBox="0 0 36 34"><path d="M3.5 21 L19 9 L27 14 L25 25 L19 29.5 L11 29.5 Z" fill="#ececec" stroke="#333" stroke-width="2" stroke-linejoin="round"/><path d="M25 13 L33 3.5" stroke="#333" stroke-width="4.5" stroke-linecap="round"/></svg>
<svg class="b" style="left:1860px;top:344px;" width="36" height="36" viewBox="0 0 36 36"><circle cx="15.5" cy="15.5" r="12.8" fill="#ececec" stroke="#333" stroke-width="2.2"/><path d="M24.5 25 L32 33" stroke="#333" stroke-width="5" stroke-linecap="round"/></svg>
<svg class="b" style="left:2365px;top:170px" width="52" height="52" viewBox="2365 170 52 52">
<g fill="none" stroke="#4a4a4a" stroke-width="1.9" stroke-linejoin="round" stroke-linecap="round">
<path d="M2380.1 180.4 Q2382.4 177.2 2386.1 176.7 Q2389.6 176.6 2391.7 178.5 L2403.2 178.5 Q2405.6 178.8 2406.5 179.9 Q2408.5 182.6 2411.6 183.6 L2408.8 194.7 L2406 206.3 Q2406 210 2406.9 214.2 Q2406.6 216 2405.1 216 L2386.6 216 Q2383.6 214.8 2382.4 213.2 L2381.5 211.4"/>
<path d="M2371.3 177.4 L2375 180.4 L2375.2 185 L2378.2 185.5 L2373.1 189.6 Q2372.6 191.4 2373.3 191.9 L2378.2 193.3 L2383.3 195.6 L2393.5 189.6"/>
<path d="M2375 180.4 L2383.8 182.2 Q2385.6 180.6 2387 180.8 Q2388.2 181 2388.9 182.2 L2393.5 189.6 M2394 182.2 L2394 190.1"/>
<path d="M2373.1 195.6 L2392.8 195.6"/>
<path d="M2373.6 196.6 L2375.9 199.4 L2373.6 200.7 L2375.9 208.1 Q2376.8 210.2 2378.2 210.9 L2384.3 210.7 L2391.7 208.6 L2392.4 203.5 L2386.6 204.4 Q2390.2 202.8 2390.7 201.7 Q2390.4 199 2388.9 197 L2373.6 196.6"/>
</g></svg>
<div class="b" style="left:674px;top:1056.5px;width:1872px;height:40.5px;background:#cecece;"></div>
<div class="b" style="left:674px;top:1097px;width:1872px;height:60px;background:#e5e5e5;"></div>
<svg class="b" style="left:2534px;top:1122px;" width="14" height="10" viewBox="0 0 14 10"><path d="M0.5 1 L17 1 L8.7 9.5 Z" fill="#6e6e6e"/></svg>
<div class="b" style="left:674px;top:1157px;width:1872px;height:80px;background:#f0f0f0;"></div>
<div class="b" style="left:674px;top:1218px;width:1872px;height:1.3px;background:#a8a8a8;"></div>
<div class="b" style="left:674px;top:1236px;width:1872px;height:1.2px;background:#d4d4d4;"></div>
<div class="b" style="left:674px;top:1237.2px;width:1872px;height:44.5px;background:#e5e5e5;"></div>
<div class="b" style="left:674px;top:1281.6px;width:1872px;height:1.4px;background:#a8a8a8;"></div>
<div class="b" style="left:2017px;top:1238px;width:1.2px;height:43px;background:#d0d0d0;"></div>
<div class="b" style="left:2320px;top:1238px;width:1.2px;height:43px;background:#d0d0d0;"></div>
<span class="t" style="left:2028.6px;top:1251px;font-size:23.6px;color:#444444;letter-spacing:-0.56px;">Alias</span>
<span class="t" style="left:2329.4px;top:1251px;font-size:23.6px;color:#444444;letter-spacing:0.41px;">Initial Value</span>
<div class="b" style="left:598px;top:558px;width:1255px;height:908.5px;background:#f0f0f0;border:1.4px solid #3f6287;box-shadow:1px 2px 6px rgba(50,70,100,0.42);"></div>
<div class="b" style="left:599.2px;top:559.2px;width:1252.6px;height:57px;background:#557ca8;"></div>
<span class="t" style="left:614.8px;top:584px;font-size:21.2px;color:#ffffff;letter-spacing:0.39px;">Select Classifier</span>
<svg class="b" style="left:1806px;top:571.4px;" width="20" height="20" viewBox="0 0 20 20"><path d="M2.8 2.6 L17.2 17 M17.2 2.6 L2.8 17" fill="none" stroke="#ffffff" stroke-width="4" stroke-linecap="square"/></svg>
<div class="b" style="left:612px;top:616.8px;width:297.6px;height:731.2px;background:#fdfdfd;border:1.2px solid #c8c8c8;"></div>
<div class="b" style="left:634.8px;top:618px;width:80.2px;height:34px;background:#f0f0f0;"></div>
<div class="b" style="left:625px;top:636px;width:9px;height:35px;border-left:1px dotted #9a9a9a;border-top:1px dotted #9a9a9a;border-bottom:1px dotted #9a9a9a;"></div>
<span class="t" style="left:636.6px;top:625px;font-size:24px;color:#444444;letter-spacing:-0.64px;">Browse</span>
<span class="t" style="left:637.5px;top:658px;font-size:24px;color:#444444;letter-spacing:-1.02px;">Search</span>
<span class="t" style="left:1308.0px;top:636px;font-size:21.2px;color:#3c3c3c;letter-spacing:0.41px;">Go To Namespace:</span>
<div class="b" style="left:1525px;top:627px;width:296px;height:33px;background:#fdfdfd;border:1.2px solid #d9d9d9;"></div>
<span class="t" style="left:1529.5px;top:636px;font-size:21.5px;color:#3c3c3c;letter-spacing:0.54px;">&lt;any&gt;</span>
<svg class="b" style="left:1794px;top:640px;" width="13" height="8" viewBox="0 0 13 8"><path d="M0.5 0.8 L11.5 0.8 L6 6.5 Z" fill="#6e6e6e"/></svg>
<div class="b" style="left:925px;top:677.5px;width:896px;height:660.5px;background:#fdfdfd;border:1.2px solid #dadada;"></div>
<div class="b" style="left:1786px;top:678.5px;width:34.5px;height:658px;background:#fdfdfd;border-left:1.2px solid #c8c8c8;border-right:1.2px solid #c8c8c8;"></div>
<div class="b" style="left:1786px;top:1069px;width:34.5px;height:235px;background:#cdcdcd;"></div>
<div class="b" style="left:1786px;top:678.5px;width:34.5px;height:33.5px;background:#fdfdfd;border:1.5px solid #c4c4c4;"></div>
<svg class="b" style="left:1794px;top:691px;" width="20" height="11" viewBox="0 0 20 11"><path d="M0.5 10 L18 10 L9.2 0.8 Z" fill="#6e6e6e"/></svg>
<div class="b" style="left:1787px;top:1304px;width:33px;height:33px;background:#fdfdfd;border:1px solid #d4d4d4;"></div>
<svg class="b" style="left:1794px;top:1316px;" width="20" height="11" viewBox="0 0 20 11"><path d="M0.5 0.8 L18 0.8 L9.2 10 Z" fill="#6e6e6e"/></svg>
<div class="b" style="left:926px;top:1182px;width:860px;height:35.6px;background:#cdcdcd;"></div>
<div class="clip" style="left:926px;top:678.5px;width:860px;height:659px;">
<svg class="b" style="left:19.399999999999977px;top:12.5px;" width="12" height="12" viewBox="0 0 12 12"><path d="M10.5 1 L10.5 10.5 L1 10.5 Z" fill="#5a5a5a" stroke="#333" stroke-width="1"/></svg>
<svg class="b" style="left:34px;top:-1.6000000000000014px;" width="30" height="30" viewBox="0 0 30 30"><path d="M4.5 6 L6 1.5 L18 1.5 L19.5 6" fill="#fdf0ec" stroke="#b0762e" stroke-width="1.8"/><path d="M3 12 L3 6.8 L26 6.8 L26 12" fill="#fdf0ec" stroke="#b0762e" stroke-width="1.8"/><rect x="1" y="12" width="27.5" height="16" fill="#a7bfdc" stroke="#7ba0cc" stroke-width="1.6"/><path d="M10 21 L10 18 Q10 15.5 13.5 15.5 Q17 15.5 17 18 L17 21 Z" fill="#fdfdfd"/><rect x="9" y="22" width="11" height="1.6" fill="#7ba0cc"/></svg>
<span class="t" style="left:73.1px;top:6px;font-size:21px;color:#444444;letter-spacing:-0.13px;">Model</span>
<svg class="b" style="left:55.39999999999998px;top:48.57px;" width="12" height="12" viewBox="0 0 12 12"><path d="M10.5 1 L10.5 10.5 L1 10.5 Z" fill="#5a5a5a" stroke="#333" stroke-width="1"/></svg>
<svg class="b" style="left:71.29999999999995px;top:38.269999999999996px;" width="32" height="27" viewBox="0 0 32 27"><rect x="1" y="1" width="29.5" height="23.2" fill="#fdf0ec" stroke="#b0762e" stroke-width="2"/><ellipse cx="16" cy="12.6" rx="8.6" ry="6" fill="#0000ff" stroke="#4a6fd8" stroke-width="1.6"/></svg>
<span class="t" style="left:109.6px;top:42px;font-size:21px;color:#444444;letter-spacing:-0.20px;">Gemeentelijk Gegevensmodel</span>
<svg class="b" style="left:92.39999999999998px;top:83.64px;" width="9" height="15" viewBox="0 0 9 15"><path d="M1 1.6 L6.8 7.5 L1 13.4 Z" fill="#fdfdfd" stroke="#555" stroke-width="1.15"/></svg>
<svg class="b" style="left:109.09999999999991px;top:72.54px;" width="28" height="26" viewBox="0 0 28 26"><path d="M2.7 6.6 L4.5 1 L15.7 1 L17.5 6.6" fill="#fdf0ec" stroke="#b0762e" stroke-width="1.8"/><rect x="1.1" y="7" width="25.2" height="16.9" fill="#fdf0ec" stroke="#b0762e" stroke-width="2"/></svg>
<span class="t" style="left:144.3px;top:78px;font-size:21px;color:#444444;letter-spacing:-0.06px;">Burgerzaken</span>
<svg class="b" style="left:92.39999999999998px;top:119.71000000000001px;" width="9" height="15" viewBox="0 0 9 15"><path d="M1 1.6 L6.8 7.5 L1 13.4 Z" fill="#fdfdfd" stroke="#555" stroke-width="1.15"/></svg>
<svg class="b" style="left:109.09999999999991px;top:108.61000000000001px;" width="28" height="26" viewBox="0 0 28 26"><path d="M2.7 6.6 L4.5 1 L15.7 1 L17.5 6.6" fill="#fdf0ec" stroke="#b0762e" stroke-width="1.8"/><rect x="1.1" y="7" width="25.2" height="16.9" fill="#fdf0ec" stroke="#b0762e" stroke-width="2"/></svg>
<span class="t" style="left:145.0px;top:114px;font-size:21px;color:#444444;letter-spacing:0.44px;">Griffie</span>
<svg class="b" style="left:92.39999999999998px;top:155.78px;" width="9" height="15" viewBox="0 0 9 15"><path d="M1 1.6 L6.8 7.5 L1 13.4 Z" fill="#fdfdfd" stroke="#555" stroke-width="1.15"/></svg>
<svg class="b" style="left:109.09999999999991px;top:144.68px;" width="28" height="26" viewBox="0 0 28 26"><path d="M2.7 6.6 L4.5 1 L15.7 1 L17.5 6.6" fill="#fdf0ec" stroke="#b0762e" stroke-width="1.8"/><rect x="1.1" y="7" width="25.2" height="16.9" fill="#fdf0ec" stroke="#b0762e" stroke-width="2"/></svg>
<span class="t" style="left:144.3px;top:150px;font-size:21px;color:#444444;letter-spacing:0.04px;">Leerplicht en Leerlingenvervoer</span>
<svg class="b" style="left:92.39999999999998px;top:191.85px;" width="9" height="15" viewBox="0 0 9 15"><path d="M1 1.6 L6.8 7.5 L1 13.4 Z" fill="#fdfdfd" stroke="#555" stroke-width="1.15"/></svg>
<svg class="b" style="left:109.09999999999991px;top:180.75px;" width="28" height="26" viewBox="0 0 28 26"><path d="M2.7 6.6 L4.5 1 L15.7 1 L17.5 6.6" fill="#fdf0ec" stroke="#b0762e" stroke-width="1.8"/><rect x="1.1" y="7" width="25.2" height="16.9" fill="#fdf0ec" stroke="#b0762e" stroke-width="2"/></svg>
<span class="t" style="left:145.1px;top:186px;font-size:21px;color:#444444;letter-spacing:0.24px;">Onderwijs</span>
<svg class="b" style="left:92.39999999999998px;top:227.92000000000002px;" width="9" height="15" viewBox="0 0 9 15"><path d="M1 1.6 L6.8 7.5 L1 13.4 Z" fill="#fdfdfd" stroke="#555" stroke-width="1.15"/></svg>
<svg class="b" style="left:109.09999999999991px;top:216.82000000000002px;" width="28" height="26" viewBox="0 0 28 26"><path d="M2.7 6.6 L4.5 1 L15.7 1 L17.5 6.6" fill="#fdf0ec" stroke="#b0762e" stroke-width="1.8"/><rect x="1.1" y="7" width="25.2" height="16.9" fill="#fdf0ec" stroke="#b0762e" stroke-width="2"/></svg>
<span class="t" style="left:144.3px;top:223px;font-size:21px;color:#444444;letter-spacing:0.25px;">Ruimte</span>
<svg class="b" style="left:90.39999999999998px;top:264.99px;" width="12" height="12" viewBox="0 0 12 12"><path d="M10.5 1 L10.5 10.5 L1 10.5 Z" fill="#5a5a5a" stroke="#333" stroke-width="1"/></svg>
<svg class="b" style="left:109.09999999999991px;top:252.89px;" width="28" height="26" viewBox="0 0 28 26"><path d="M2.7 6.6 L4.5 1 L15.7 1 L17.5 6.6" fill="#fdf0ec" stroke="#b0762e" stroke-width="1.8"/><rect x="1.1" y="7" width="25.2" height="16.9" fill="#fdf0ec" stroke="#b0762e" stroke-width="2"/></svg>
<span class="t" style="left:145.1px;top:259px;font-size:21px;color:#444444;letter-spacing:0.11px;">Sport, Cultuur en Recreatie</span>
<svg class="b" style="left:127.40000000000009px;top:300.06px;" width="9" height="15" viewBox="0 0 9 15"><path d="M1 1.6 L6.8 7.5 L1 13.4 Z" fill="#fdfdfd" stroke="#555" stroke-width="1.15"/></svg>
<svg class="b" style="left:141.0999999999999px;top:288.96px;" width="28" height="26" viewBox="0 0 28 26"><path d="M2.7 6.6 L4.5 1 L15.7 1 L17.5 6.6" fill="#fdf0ec" stroke="#b0762e" stroke-width="1.8"/><rect x="1.1" y="7" width="25.2" height="16.9" fill="#fdf0ec" stroke="#b0762e" stroke-width="2"/></svg>
<span class="t" style="left:179.7px;top:295px;font-size:21px;color:#444444;letter-spacing:0.11px;">Erfgoed: Archeologie</span>
<svg class="b" style="left:127.40000000000009px;top:336.13px;" width="9" height="15" viewBox="0 0 9 15"><path d="M1 1.6 L6.8 7.5 L1 13.4 Z" fill="#fdfdfd" stroke="#555" stroke-width="1.15"/></svg>
<svg class="b" style="left:141.0999999999999px;top:325.03px;" width="28" height="26" viewBox="0 0 28 26"><path d="M2.7 6.6 L4.5 1 L15.7 1 L17.5 6.6" fill="#fdf0ec" stroke="#b0762e" stroke-width="1.8"/><rect x="1.1" y="7" width="25.2" height="16.9" fill="#fdf0ec" stroke="#b0762e" stroke-width="2"/></svg>
<span class="t" style="left:179.7px;top:331px;font-size:21px;color:#444444;letter-spacing:0.26px;">Erfgoed: Archief</span>
<svg class="b" style="left:127.40000000000009px;top:372.2px;" width="9" height="15" viewBox="0 0 9 15"><path d="M1 1.6 L6.8 7.5 L1 13.4 Z" fill="#fdfdfd" stroke="#555" stroke-width="1.15"/></svg>
<svg class="b" style="left:141.0999999999999px;top:361.09999999999997px;" width="28" height="26" viewBox="0 0 28 26"><path d="M2.7 6.6 L4.5 1 L15.7 1 L17.5 6.6" fill="#fdf0ec" stroke="#b0762e" stroke-width="1.8"/><rect x="1.1" y="7" width="25.2" height="16.9" fill="#fdf0ec" stroke="#b0762e" stroke-width="2"/></svg>
<span class="t" style="left:179.7px;top:367px;font-size:21px;color:#444444;letter-spacing:0.18px;">Erfgoed: Monumenten</span>
<svg class="b" style="left:125.40000000000009px;top:409.27px;" width="12" height="12" viewBox="0 0 12 12"><path d="M10.5 1 L10.5 10.5 L1 10.5 Z" fill="#5a5a5a" stroke="#333" stroke-width="1"/></svg>
<svg class="b" style="left:141.0999999999999px;top:397.16999999999996px;" width="28" height="26" viewBox="0 0 28 26"><path d="M2.7 6.6 L4.5 1 L15.7 1 L17.5 6.6" fill="#fdf0ec" stroke="#b0762e" stroke-width="1.8"/><rect x="1.1" y="7" width="25.2" height="16.9" fill="#fdf0ec" stroke="#b0762e" stroke-width="2"/></svg>
<span class="t" style="left:179.7px;top:403px;font-size:21px;color:#444444;letter-spacing:0.17px;">Erfgoed: Voorbeeld</span>
<svg class="b" style="left:162.4000000000001px;top:444.34000000000003px;" width="9" height="15" viewBox="0 0 9 15"><path d="M1 1.6 L6.8 7.5 L1 13.4 Z" fill="#fdfdfd" stroke="#555" stroke-width="1.15"/></svg>
<svg class="b" style="left:177px;top:433.24px;" width="28" height="26" viewBox="0 0 28 26"><path d="M2.7 6.6 L4.5 1 L15.7 1 L17.5 6.6" fill="#fdf0ec" stroke="#b0762e" stroke-width="1.8"/><rect x="1.1" y="7" width="25.2" height="16.9" fill="#fdf0ec" stroke="#b0762e" stroke-width="2"/></svg>
<span class="t" style="left:214.7px;top:439px;font-size:21px;color:#444444;letter-spacing:0.17px;">Diagram</span>
<svg class="b" style="left:160.4000000000001px;top:481.41px;" width="12" height="12" viewBox="0 0 12 12"><path d="M10.5 1 L10.5 10.5 L1 10.5 Z" fill="#5a5a5a" stroke="#333" stroke-width="1"/></svg>
<svg class="b" style="left:177px;top:469.31px;" width="28" height="26" viewBox="0 0 28 26"><path d="M2.7 6.6 L4.5 1 L15.7 1 L17.5 6.6" fill="#fdf0ec" stroke="#b0762e" stroke-width="1.8"/><rect x="1.1" y="7" width="25.2" height="16.9" fill="#fdf0ec" stroke="#b0762e" stroke-width="2"/></svg>
<span class="t" style="left:214.7px;top:475px;font-size:21px;color:#444444;letter-spacing:-0.00px;">Model Voorbeeld</span>
<svg class="b" style="left:215.20000000000005px;top:505.08px;" width="24" height="30" viewBox="0 0 24 30"><rect x="1" y="1" width="21" height="27.5" fill="#fdfdfd" stroke="#4f74c4" stroke-width="2"/><path d="M1 7.5 L22 7.5 M1 15.3 L22 15.3" stroke="#4f74c4" stroke-width="1.8"/><path d="M5 11.5 L13 11.5 M16 11.5 L19 11.5" stroke="#e8606a" stroke-width="1.6"/><path d="M5 19.3 L13 19.3 M16 19.3 L19 19.3 M5 23.3 L13 23.3 M16 23.3 L19 23.3" stroke="#333" stroke-width="1.8"/></svg>
<span class="t" style="left:248.7px;top:511px;font-size:21px;color:#444444;letter-spacing:0.40px;">Bouwstijl</span>
<svg class="b" style="left:127.40000000000009px;top:552.55px;" width="9" height="15" viewBox="0 0 9 15"><path d="M1 1.6 L6.8 7.5 L1 13.4 Z" fill="#fdfdfd" stroke="#555" stroke-width="1.15"/></svg>
<svg class="b" style="left:141.0999999999999px;top:541.4499999999999px;" width="28" height="26" viewBox="0 0 28 26"><path d="M2.7 6.6 L4.5 1 L15.7 1 L17.5 6.6" fill="#fdf0ec" stroke="#b0762e" stroke-width="1.8"/><rect x="1.1" y="7" width="25.2" height="16.9" fill="#fdf0ec" stroke="#b0762e" stroke-width="2"/></svg>
<span class="t" style="left:180.4px;top:547px;font-size:21px;color:#444444;letter-spacing:0.01px;">Generieke Entiteiten Erfgoed</span>
<svg class="b" style="left:127.40000000000009px;top:588.62px;" width="9" height="15" viewBox="0 0 9 15"><path d="M1 1.6 L6.8 7.5 L1 13.4 Z" fill="#fdfdfd" stroke="#555" stroke-width="1.15"/></svg>
<svg class="b" style="left:141.0999999999999px;top:577.52px;" width="28" height="26" viewBox="0 0 28 26"><path d="M2.7 6.6 L4.5 1 L15.7 1 L17.5 6.6" fill="#fdf0ec" stroke="#b0762e" stroke-width="1.8"/><rect x="1.1" y="7" width="25.2" height="16.9" fill="#fdf0ec" stroke="#b0762e" stroke-width="2"/></svg>
<span class="t" style="left:179.7px;top:583px;font-size:21px;color:#444444;letter-spacing:-0.08px;">Museum Prinsenhof</span>
<svg class="b" style="left:127.40000000000009px;top:624.69px;" width="9" height="15" viewBox="0 0 9 15"><path d="M1 1.6 L6.8 7.5 L1 13.4 Z" fill="#fdfdfd" stroke="#555" stroke-width="1.15"/></svg>
<svg class="b" style="left:141.0999999999999px;top:613.59px;" width="28" height="26" viewBox="0 0 28 26"><path d="M2.7 6.6 L4.5 1 L15.7 1 L17.5 6.6" fill="#fdf0ec" stroke="#b0762e" stroke-width="1.8"/><rect x="1.1" y="7" width="25.2" height="16.9" fill="#fdf0ec" stroke="#b0762e" stroke-width="2"/></svg>
<span class="t" style="left:180.5px;top:619px;font-size:21px;color:#444444;letter-spacing:0.04px;">Sport</span>
<svg class="b" style="left:92.39999999999998px;top:660.76px;" width="9" height="15" viewBox="0 0 9 15"><path d="M1 1.6 L6.8 7.5 L1 13.4 Z" fill="#fdfdfd" stroke="#555" stroke-width="1.15"/></svg>
<svg class="b" style="left:109.09999999999991px;top:649.66px;" width="28" height="26" viewBox="0 0 28 26"><path d="M2.7 6.6 L4.5 1 L15.7 1 L17.5 6.6" fill="#fdf0ec" stroke="#b0762e" stroke-width="1.8"/><rect x="1.1" y="7" width="25.2" height="16.9" fill="#fdf0ec" stroke="#b0762e" stroke-width="2"/></svg>
<span class="t" style="left:146.0px;top:655px;font-size:21px;color:#444444;letter-spacing:0.14px;">Vergunningverlening, Toezicht en Handhaving</span>
</div>
<div class="b" style="left:612.5px;top:1347.5px;width:1227px;height:1.2px;background:#d8d8d8;"></div>
<div class="b" style="left:615px;top:1359.5px;width:1223px;height:27.3px;background:#d0d0d0;"></div>
<span class="t" style="left:620.4px;top:1363px;font-size:21px;color:#3c3c3c;letter-spacing:-0.14px;">Types : Classifiers such as Classes, Actors, Activities etc</span>
<div class="b" style="left:615px;top:1394.3px;width:149.6px;height:49.4px;background:#fdfdfd;border:1.2px solid #adadad;"></div>
<span class="t" style="left:647.3px;top:1409px;font-size:21.5px;color:#3c3c3c;letter-spacing:-0.39px;">Add New</span>
<div class="b" style="left:1360.3px;top:1394.3px;width:149.6px;height:49.4px;background:#fdfdfd;border:1.7px solid #2b5580;"></div>
<span class="t" style="left:1419.3px;top:1409px;font-size:21.5px;color:#3c3c3c;letter-spacing:-0.32px;">OK</span>
<div class="b" style="left:1520.3px;top:1394.3px;width:149.6px;height:49.4px;background:#fdfdfd;border:1.2px solid #adadad;"></div>
<span class="t" style="left:1560.8px;top:1409px;font-size:21.5px;color:#3c3c3c;letter-spacing:0.39px;">Cancel</span>
<div class="b" style="left:1680px;top:1394.3px;width:149.6px;height:49.4px;background:#fdfdfd;border:1.2px solid #adadad;"></div>
<span class="t" style="left:1731.3px;top:1409px;font-size:21.5px;color:#3c3c3c;letter-spacing:0.61px;">Help</span>
</body></html>
